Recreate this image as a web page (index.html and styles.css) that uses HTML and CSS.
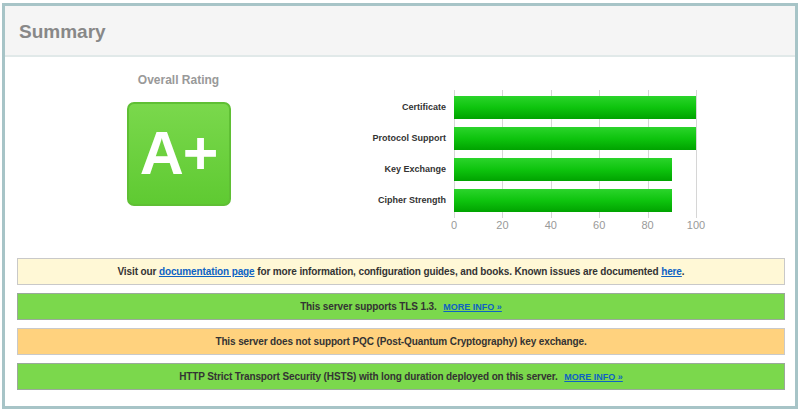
FILE: index.html
```html
<!DOCTYPE html>
<html lang="en">
<head>
  <meta charset="UTF-8" />
  <title>SSL Report - Summary</title>
  <link rel="stylesheet" href="styles.css">
</head>
<body>
  <div class="report-box">
    <div class="report-header">Summary</div>

    <div class="summary">
      <div class="rating">
        <div class="rating-title">Overall Rating</div>
        <div class="grade">A+</div>
      </div>

      <div class="chart">
        <div class="chart-labels">
          <div class="label">Certificate</div>
          <div class="label">Protocol Support</div>
          <div class="label">Key Exchange</div>
          <div class="label">Cipher Strength</div>
        </div>
        <div class="chart-plot">
          <div class="grid">
            <span class="gridline" style="left: 0%"></span>
            <span class="gridline" style="left: 20%"></span>
            <span class="gridline" style="left: 40%"></span>
            <span class="gridline" style="left: 60%"></span>
            <span class="gridline" style="left: 80%"></span>
            <span class="gridline" style="left: 100%"></span>
          </div>
          <div class="bars">
            <div class="bar" style="width: 100%"></div>
            <div class="bar" style="width: 100%"></div>
            <div class="bar" style="width: 90%"></div>
            <div class="bar" style="width: 90%"></div>
          </div>
          <div class="axis">
            <span style="left: 0%">0</span>
            <span style="left: 20%">20</span>
            <span style="left: 40%">40</span>
            <span style="left: 60%">60</span>
            <span style="left: 80%">80</span>
            <span style="left: 100%">100</span>
          </div>
        </div>
      </div>
    </div>

    <div class="notices">
      <div class="notice info">
        Visit our <a href="#">documentation page</a> for more information, configuration guides, and books. Known issues are documented <a href="#">here</a>.
      </div>
      <div class="notice good">
        This server supports TLS 1.3. <a class="more" href="#">MORE INFO &raquo;</a>
      </div>
      <div class="notice warn">
        This server does not support PQC (Post-Quantum Cryptography) key exchange.
      </div>
      <div class="notice good">
        HTTP Strict Transport Security (HSTS) with long duration deployed on this server. <a class="more" href="#">MORE INFO &raquo;</a>
      </div>
    </div>
  </div>
</body>
</html>
```

FILE: styles.css
```css
* {
  box-sizing: border-box;
}

body {
  margin: 0;
  padding: 3px 2px;
  font-family: 'Liberation Sans', Arial, sans-serif;
  background: #fff;
  color: #333;
}

.report-box {
  width: 796px;
  height: 406px;
  border: 3px solid #a7c4c7;
  background: #fff;
}

.report-header {
  height: 51px;
  padding: 0 0 0 14px;
  background: #f5f5f5;
  border-bottom: 2px solid #e1e9e9;
  font-size: 19px;
  font-weight: bold;
  color: #888;
  line-height: 52px;
}

.summary {
  display: flex;
  height: 198px;
}

/* overall rating */
.rating {
  width: 347px;
  display: flex;
  flex-direction: column;
  align-items: center;
  padding-top: 16px;
}

.rating-title {
  font-size: 12px;
  font-weight: bold;
  color: #999;
  line-height: 14px;
}

.grade {
  margin-top: 15px;
  width: 104px;
  height: 104px;
  border: 2px solid #5fbf34;
  border-radius: 7px;
  background: linear-gradient(#7ad84c, #5fca32);
  color: #fff;
  font-size: 61px;
  font-weight: bold;
  text-align: center;
  line-height: 98px;
  letter-spacing: -1px;
}

/* bar chart */
.chart {
  display: flex;
  margin-top: 35px;
}

.chart-labels {
  width: 94px;
  padding-top: 4px;
  display: flex;
  flex-direction: column;
  gap: 8px;
  margin-right: 8px;
}

.label {
  height: 23px;
  line-height: 23px;
  text-align: right;
  font-size: 9px;
  font-weight: bold;
  color: #333;
  white-space: nowrap;
}

.chart-plot {
  position: relative;
  width: 242px;
  height: 128px;
  margin-top: -2px;
}

.grid {
  position: absolute;
  top: 0;
  left: 0;
  right: 0;
  bottom: 0;
}

.gridline {
  position: absolute;
  top: 0;
  bottom: 0;
  width: 1px;
  background: #d6d6d6;
}

.bars {
  position: relative;
  padding-top: 6px;
  display: flex;
  flex-direction: column;
  gap: 8px;
}

.bar {
  height: 23px;
  background: linear-gradient(#2bd42b, #0ec40e 50%, #00a300);
}

.axis {
  position: absolute;
  top: 129px;
  left: 0;
  right: 0;
  font-size: 11px;
  color: #999;
}

.axis span {
  position: absolute;
  top: 0;
  transform: translateX(-50%);
}

/* notices */
.notices {
  display: flex;
  flex-direction: column;
  gap: 8px;
  padding: 3px 10px 0 12px;
}

.notice {
  height: 27px;
  line-height: 25px;
  border: 1px solid #c9c9c9;
  text-align: center;
  font-size: 10px;
  font-weight: bold;
  letter-spacing: -0.12px;
  color: #333;
}

.notice a {
  color: #0d62c4;
}

.notice a.more {
  font-size: 9px;
  letter-spacing: 0;
  margin-left: 4px;
}

.info {
  background: #fff8d6;
}

.good {
  background: #7bd84c;
  border-color: #9aa99a;
}

.warn {
  background: #ffd27e;
}
```
